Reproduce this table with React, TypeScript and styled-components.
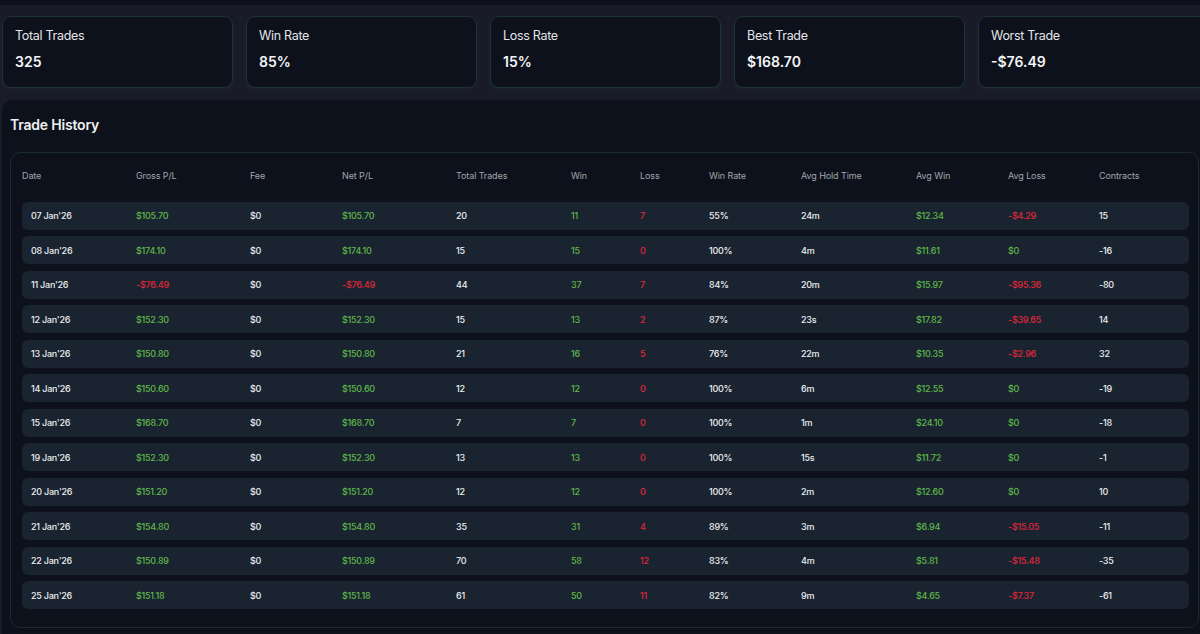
import React from "react";
import styled, { createGlobalStyle } from "styled-components";

const GlobalStyle = createGlobalStyle`
  html, body { margin: 0; padding: 0; }
  body {
    background: #1a1b29;
    font-family: "Inter", "Liberation Sans", sans-serif;
    color: #e8e9ec;
    overflow: hidden;
    -webkit-font-smoothing: antialiased;
  }
`;

const Page = styled.div`
  width: 1220px;
  height: 634px;
  display: flex;
  flex-direction: column;
`;

const TopStrip = styled.div`
  height: 5px;
  background: #0e111c;
`;

const StatsRow = styled.div`
  display: grid;
  grid-template-columns: repeat(5, 231px);
  gap: 13px;
  padding: 11px 0 0 2px;
  height: 95px;
  box-sizing: border-box;
`;

const Card = styled.div`
  height: 72px;
  box-sizing: border-box;
  background: #0c111b;
  border: 1px solid #1d3236;
  border-radius: 9px;
  padding: 10px 12px;
  display: flex;
  flex-direction: column;
  gap: 7px;
  box-shadow: 0 3px 4px rgba(30, 40, 50, 0.55);
`;

const CardLabel = styled.div`
  font-size: 12.5px;
  letter-spacing: -0.3px;
  color: #e4e5e8;
  line-height: 18px;
`;

const CardValue = styled.div`
  font-size: 14px;
  font-weight: 600;
  color: #f4f5f7;
  line-height: 20px;
`;

const Panel = styled.div`
  margin: 0 0 0 2px;
  flex: 1;
  background: #0c111b;
  border-radius: 10px 10px 0 0;
  padding: 12px 0 0 8px;
  display: flex;
  flex-direction: column;
`;

const Title = styled.h2`
  margin: 0;
  font-size: 14px;
  font-weight: 600;
  color: #eef0f2;
  line-height: 26px;
  letter-spacing: -0.2px;
`;

const TableBox = styled.div`
  margin-top: 14px;
  width: 1189px;
  box-sizing: border-box;
  border: 1px solid #1a2c32;
  border-radius: 10px;
  padding: 10px 9px 18px 11px;
  display: flex;
  flex-direction: column;
  gap: 6.5px;
`;

const cols =
  "114px 114px 92px 114px 115px 69px 69px 92px 115px 92px 91px 1fr";

const HeaderRow = styled.div`
  display: grid;
  grid-template-columns: ${cols};
  height: 24px;
  align-items: center;
  margin-bottom: 8px;
`;

const HeaderCell = styled.div`
  font-size: 9px;
  color: #a2a6ad;
  letter-spacing: -0.1px;
  white-space: nowrap;
`;

const Row = styled.div`
  display: grid;
  grid-template-columns: ${cols};
  height: 28px;
  align-items: center;
  background: #1a2430;
  border-radius: 6px;
`;

type Tone = "plain" | "pos" | "neg";

const Cell = styled.div<{ $tone?: Tone; $first?: boolean }>`
  font-size: 9px;
  font-weight: 500;
  letter-spacing: -0.25px;
  white-space: nowrap;
  padding-left: ${(p) => (p.$first ? "9px" : "0")};
  color: ${(p) =>
    p.$tone === "pos" ? "#5fb64a" : p.$tone === "neg" ? "#e0263a" : "#eceef1"};
`;

const stats = [
  { label: "Total Trades", value: "325" },
  { label: "Win Rate", value: "85%" },
  { label: "Loss Rate", value: "15%" },
  { label: "Best Trade", value: "$168.70" },
  { label: "Worst Trade", value: "-$76.49" },
];

const headers = [
  "Date",
  "Gross P/L",
  "Fee",
  "Net P/L",
  "Total Trades",
  "Win",
  "Loss",
  "Win Rate",
  "Avg Hold Time",
  "Avg Win",
  "Avg Loss",
  "Contracts",
];

type TradeRow = [
  string, string, string, string, string, string, string, string, string, string, string, string
];

const rows: TradeRow[] = [
  ["07 Jan'26", "$105.70", "$0", "$105.70", "20", "11", "7", "55%", "24m", "$12.34", "-$4.29", "15"],
  ["08 Jan'26", "$174.10", "$0", "$174.10", "15", "15", "0", "100%", "4m", "$11.61", "$0", "-16"],
  ["11 Jan'26", "-$76.49", "$0", "-$76.49", "44", "37", "7", "84%", "20m", "$15.97", "-$95.36", "-80"],
  ["12 Jan'26", "$152.30", "$0", "$152.30", "15", "13", "2", "87%", "23s", "$17.82", "-$39.65", "14"],
  ["13 Jan'26", "$150.80", "$0", "$150.80", "21", "16", "5", "76%", "22m", "$10.35", "-$2.96", "32"],
  ["14 Jan'26", "$150.60", "$0", "$150.60", "12", "12", "0", "100%", "6m", "$12.55", "$0", "-19"],
  ["15 Jan'26", "$168.70", "$0", "$168.70", "7", "7", "0", "100%", "1m", "$24.10", "$0", "-18"],
  ["19 Jan'26", "$152.30", "$0", "$152.30", "13", "13", "0", "100%", "15s", "$11.72", "$0", "-1"],
  ["20 Jan'26", "$151.20", "$0", "$151.20", "12", "12", "0", "100%", "2m", "$12.60", "$0", "10"],
  ["21 Jan'26", "$154.80", "$0", "$154.80", "35", "31", "4", "89%", "3m", "$6.94", "-$15.05", "-11"],
  ["22 Jan'26", "$150.89", "$0", "$150.89", "70", "58", "12", "83%", "4m", "$5.81", "-$15.48", "-35"],
  ["25 Jan'26", "$151.18", "$0", "$151.18", "61", "50", "11", "82%", "9m", "$4.65", "-$7.37", "-61"],
];

const moneyTone = (v: string): Tone => (v.startsWith("-") ? "neg" : "pos");

const toneFor = (i: number, v: string): Tone => {
  if (i === 1 || i === 3 || i === 9 || i === 10) return moneyTone(v);
  if (i === 5) return "pos";
  if (i === 6) return "neg";
  return "plain";
};

export default function App() {
  return (
    <>
      <GlobalStyle />
      <Page>
        <TopStrip />
        <StatsRow>
          {stats.map((s) => (
            <Card key={s.label}>
              <CardLabel>{s.label}</CardLabel>
              <CardValue>{s.value}</CardValue>
            </Card>
          ))}
        </StatsRow>
        <Panel>
          <Title>Trade History</Title>
          <TableBox>
            <HeaderRow>
              {headers.map((h) => (
                <HeaderCell key={h}>{h}</HeaderCell>
              ))}
            </HeaderRow>
            {rows.map((r) => (
              <Row key={r[0]}>
                {r.map((v, i) => (
                  <Cell key={i} $first={i === 0} $tone={toneFor(i, v)}>
                    {v}
                  </Cell>
                ))}
              </Row>
            ))}
          </TableBox>
        </Panel>
      </Page>
    </>
  );
}
